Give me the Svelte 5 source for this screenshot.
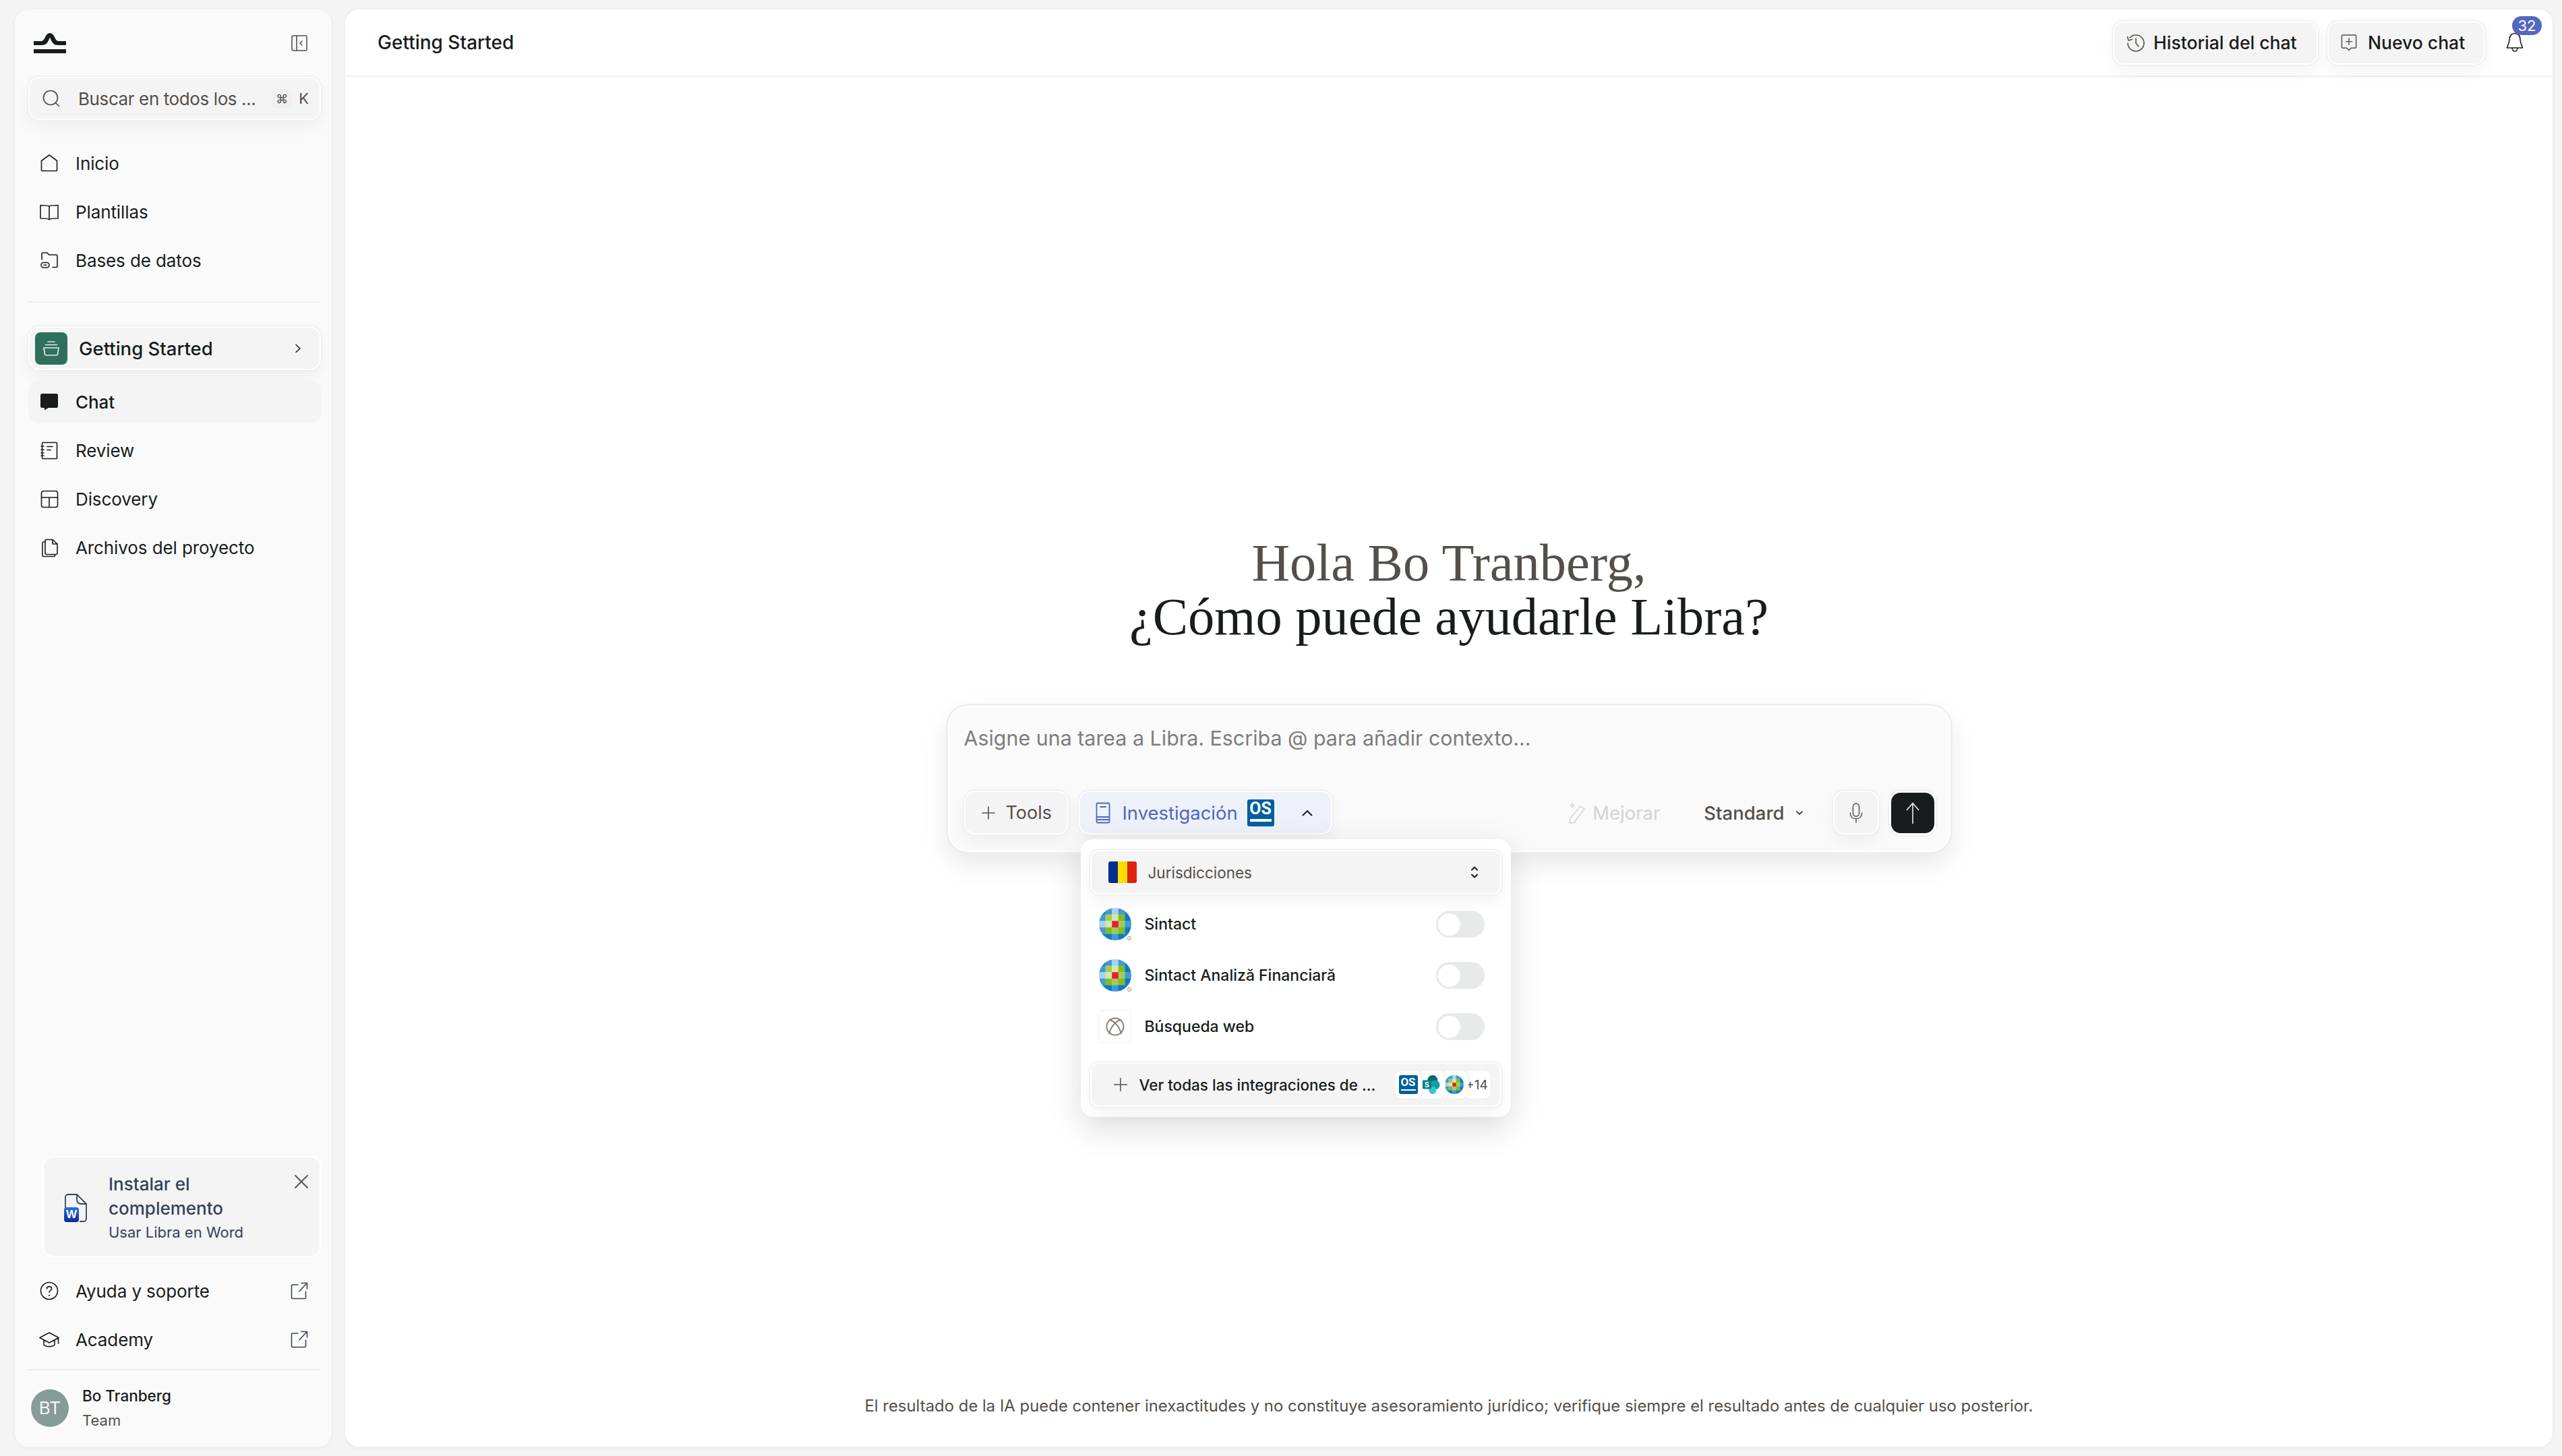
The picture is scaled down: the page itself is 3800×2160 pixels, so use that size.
<script>
  const topNav = [
    { label: 'Inicio', icon: 'home' },
    { label: 'Plantillas', icon: 'book' },
    { label: 'Bases de datos', icon: 'folder' }
  ];
  const projectNav = [
    { label: 'Chat', icon: 'chat', active: true },
    { label: 'Review', icon: 'notebook' },
    { label: 'Discovery', icon: 'table' },
    { label: 'Archivos del proyecto', icon: 'files' }
  ];
  const sources = [
    { label: 'Sintact', logo: 'wk' },
    { label: 'Sintact Analiză Financiară', logo: 'wk' },
    { label: 'Búsqueda web', logo: 'web' }
  ];
  const wkGrid = [
    ['#0a7cc1', '#3f9ad6', '#a6d3ee', '#3f9ad6', '#0a7cc1'],
    ['#3f9ad6', '#a2cc5a', '#d4e8a8', '#85bc20', '#0a7cc1'],
    ['#a6d3ee', '#d4e8a8', '#e5202e', '#a2cc5a', '#3f9ad6'],
    ['#3f9ad6', '#85bc20', '#a2cc5a', '#85bc20', '#0a7cc1'],
    ['#0a7cc1', '#0a7cc1', '#3f9ad6', '#0a7cc1', '#0a7cc1']
  ];
</script>

{#snippet navIcon(name)}
  <svg class="nav-icon" viewBox="0 0 30 30" fill="none" stroke="currentColor" stroke-width="1.6" stroke-linejoin="round" stroke-linecap="round">
    {#if name === 'home'}
      <path d="M15 3 26.500 11.500V25a1.500 1.500 0 0 1-1.500 1.500H5A1.500 1.500 0 0 1 3.500 25V11.500z" />
    {:else if name === 'book'}
      <path d="M15 7c-2-1.500-9-1.500-13-1.500v19.500c4 0 11 0 13 1.500 2-1.500 9-1.500 13-1.500V5.500C24 5.500 17 5.500 15 7zM15 7v20" />
    {:else if name === 'folder'}
      <path d="M4 14V5.500C4 4.500 4.500 4 5.500 4h6.500l2.500 3h11c1 0 1.500.5 1.500 1.500V24c0 1-.5 1.500-1.500 1.500H20" />
      <rect x="3" y="18.500" width="12" height="7.500" rx="3.700" />
      <path d="M7 22.200h4" />
    {:else if name === 'chat'}
      <path fill="currentColor" stroke="none" d="M4.500 3h21A2.500 2.500 0 0 1 28 5.500v16a2.500 2.500 0 0 1-2.500 2.500H14l-6 3.500V24H4.500A2.500 2.500 0 0 1 2 21.500v-16A2.500 2.500 0 0 1 4.500 3z" />
    {:else if name === 'notebook'}
      <path d="M6 3.500h19a1.500 1.500 0 0 1 1.500 1.500v21a1.500 1.500 0 0 1-1.500 1.500H6a1.500 1.500 0 0 1-1.500-1.500V5A1.500 1.500 0 0 1 6 3.500z" />
      <path d="M3 9h4M3 14h4M3 19h4M3 23h4M12 9.500h8M12 14.500h5" />
    {:else if name === 'table'}
      <rect x="3.500" y="3.500" width="24" height="24" rx="3" />
      <path d="M3.500 13h24M15 13v14.500" />
    {:else if name === 'files'}
      <path d="M9 24V5a1.500 1.500 0 0 1 1.500-1.500H20L27 10v14a1.500 1.500 0 0 1-1.500 1.500h-15A1.500 1.500 0 0 1 9 24zM20 3.500V10h7" />
      <path d="M9 7H6.500A1.500 1.500 0 0 0 5 8.500V27a1.500 1.500 0 0 0 1.500 1.500H22a1.500 1.500 0 0 0 1.500-1.500v-1.500" />
    {:else if name === 'help'}
      <circle cx="15" cy="15" r="12.500" />
      <path d="M11.500 12c0-2 1.600-3.400 3.600-3.400s3.500 1.300 3.500 3.100c0 2.700-3.600 2.800-3.600 5.500" />
      <path d="M15 21.500v.3" stroke-width="2" />
    {:else if name === 'academy'}
      <path d="M15 5 1 12.500 15 20l14-7.500zM7 16v7c3 3.500 13 3.500 16 0v-7M28.500 13v8" />
    {/if}
  </svg>
{/snippet}

{#snippet external()}
  <svg class="ext" viewBox="0 0 26 26" fill="none" stroke="#3c4654" stroke-width="1.600" stroke-linecap="round" stroke-linejoin="round">
    <path d="M11 4H3a1.500 1.500 0 0 0-1.500 1.500V23A1.500 1.500 0 0 0 3 24.500h18a1.500 1.500 0 0 0 1.500-1.500v-9M13 13.500 24.500 1.500M16 1.500h8.500V10" />
  </svg>
{/snippet}

{#snippet wkLogo(size, mark)}
  <svg width={size} height={size} viewBox="0 0 48 48" class="wk">
    <defs>
      <clipPath id="wk-clip"><circle cx="24" cy="24" r="24" /></clipPath>
    </defs>
    <g clip-path="url(#wk-clip)">
      {#each wkGrid as row, r}
        {#each row as color, c}
          <rect x={c * 9.600} y={r * 9.600} width="9.900" height="9.900" fill={color} />
        {/each}
      {/each}
    </g>
    {#if mark}
      <circle cx="45" cy="45" r="2.500" fill="#fff" stroke="#8a8a8a" stroke-width="1" />
    {/if}
  </svg>
{/snippet}

{#snippet osBadge()}
  <span class="os"><span class="os-text">OS</span><span class="os-bar"></span></span>
{/snippet}

<div class="page">
  <aside class="sidebar">
    <div class="brand">
      <svg class="logo" viewBox="0 0 48 30" fill="#181c1c">
        <path d="M0 12h10c4 0 5-2 7-6 2-4 4-6 7-6s5 2 7 6c2 4 3 6 7 6h10v6H36c-6 0-8-3-10-7-1-2-1.500-4-2-4s-1 2-2 4c-2 4-4 7-10 7H0zM0 24h48v6H0z" />
      </svg>
      <svg class="collapse" viewBox="0 0 24 24" fill="none" stroke="#544f4a" stroke-width="1.600" stroke-linejoin="round" stroke-linecap="round">
        <rect x="1" y="1" width="22" height="22" rx="1.500" />
        <path d="M8 1v22M16 9l-3 3 3 3" />
      </svg>
    </div>

    <div class="search chip">
      <svg class="search-icon" viewBox="0 0 26 26" fill="none" stroke="#544f4a" stroke-width="1.700" stroke-linecap="round">
        <circle cx="12" cy="12" r="10.500" />
        <path d="M20 20l4.500 4.500" />
      </svg>
      <span class="search-text">Buscar en todos los ...</span>
      <span class="kbd">⌘</span>
      <span class="kbd-k">K</span>
    </div>

    <nav class="nav top-nav">
      {#each topNav as item}
        <div class="nav-item">
          {@render navIcon(item.icon)}
          <span>{item.label}</span>
        </div>
      {/each}
    </nav>

    <div class="divider"></div>

    <div class="project chip">
      <span class="project-icon">
        <svg viewBox="0 0 26 24" fill="none" stroke="#dfeee8" stroke-width="1.700" stroke-linejoin="round" stroke-linecap="round">
          <path d="M8 2h10M4.500 6.500h17M2 11h22l-1.500 9.500a2 2 0 0 1-2 1.500h-15a2 2 0 0 1-2-1.500z" />
        </svg>
      </span>
      <span class="project-name">Getting Started</span>
      <svg class="project-chevron" viewBox="0 0 10 14" fill="none" stroke="#181c1c" stroke-width="1.600" stroke-linecap="round" stroke-linejoin="round"><path d="M2 1.500 8 7l-6 5.500" /></svg>
    </div>

    <nav class="nav project-nav">
      {#each projectNav as item}
        <div class="nav-item" class:active={item.active}>
          {@render navIcon(item.icon)}
          <span>{item.label}</span>
        </div>
      {/each}
    </nav>

    <div class="addin">
      <svg class="word" viewBox="0 0 34 42">
        <path d="M2 20V5a4 4 0 0 1 4-4h13l14 14v22a4 4 0 0 1-4 4h-5M19 1v8a6 6 0 0 0 6 6h8" fill="none" stroke="#35425a" stroke-width="1.800" stroke-linecap="round" stroke-linejoin="round" />
        <defs><linearGradient id="word-grad" x1="0" y1="0" x2="0" y2="1"><stop offset="0" stop-color="#2a72e0" /><stop offset="1" stop-color="#0a2a9e" /></linearGradient></defs>
        <rect x="0" y="20" width="22" height="22" rx="4" fill="url(#word-grad)" />
        <text x="11" y="36" text-anchor="middle" class="word-w">W</text>
      </svg>
      <div class="addin-text">
        <div class="addin-title">Instalar el complemento</div>
        <div class="addin-sub">Usar Libra en Word</div>
      </div>
      <svg class="addin-close" viewBox="0 0 20 20" fill="none" stroke="#544f4a" stroke-width="1.800" stroke-linecap="round"><path d="M1 1l18 18M19 1 1 19" /></svg>
    </div>

    <nav class="nav footer-nav">
      <div class="nav-item">
        {@render navIcon('help')}
        <span>Ayuda y soporte</span>
        {@render external()}
      </div>
      <div class="nav-item">
        {@render navIcon('academy')}
        <span>Academy</span>
        {@render external()}
      </div>
    </nav>

    <div class="divider user-divider"></div>

    <div class="user">
      <span class="avatar">BT</span>
      <div class="user-text">
        <div class="user-name">Bo Tranberg</div>
        <div class="user-plan">Team</div>
      </div>
    </div>
  </aside>

  <main class="main">
    <header class="header">
      <span class="header-title">Getting Started</span>
      <div class="header-actions">
        <button class="chip head-btn history">
          <svg viewBox="0 0 28 28" fill="none" stroke="#544f4a" stroke-width="1.600" stroke-linecap="round" stroke-linejoin="round">
            <path d="M5 7a12 12 0 1 1-3 8M1.500 5.500 3 11l5.500-1.500M14 8v7l4 5" />
          </svg>
          Historial del chat
        </button>
        <button class="chip head-btn new-chat">
          <svg viewBox="0 0 26 28" fill="none" stroke="#544f4a" stroke-width="1.600" stroke-linecap="round" stroke-linejoin="round">
            <path d="M3 2h20a1.500 1.500 0 0 1 1.500 1.500v18a1.500 1.500 0 0 1-1.500 1.500h-6.500L13 26.500 9.500 23H3a1.500 1.500 0 0 1-1.500-1.500v-18A1.500 1.500 0 0 1 3 2zM13 7.500v10M8 12.500h10" />
          </svg>
          Nuevo chat
        </button>
        <div class="bell-wrap">
          <svg class="bell" viewBox="0 0 26 30" fill="none" stroke="#181c1c" stroke-width="1.600" stroke-linecap="round" stroke-linejoin="round">
            <path d="M13 1.500c-5 0-8 4-8 9 0 7-3.500 10-3.500 12.500h23c0-2.500-3.500-5.500-3.500-12.500 0-5-3-9-8-9zM9 23c0 3 1.800 5 4 5s4-2 4-5" />
          </svg>
          <span class="badge">32</span>
        </div>
      </div>
    </header>

    <section class="center">
      <h1 class="greeting">
        <span class="hello">Hola Bo Tranberg,</span>
        <span class="ask">¿Cómo puede ayudarle Libra?</span>
      </h1>

      <div class="composer">
        <div class="placeholder">Asigne una tarea a Libra. Escriba @ para añadir contexto...</div>
        <div class="composer-bar">
          <button class="chip tools">
            <svg viewBox="0 0 20 20" fill="none" stroke="#544f4a" stroke-width="1.600" stroke-linecap="round"><path d="M10 1v18M1 10h18" /></svg>
            Tools
          </button>
          <button class="chip research">
            <svg class="research-book" viewBox="0 0 22 32" fill="none" stroke="#4f66bf" stroke-width="1.800" stroke-linejoin="round" stroke-linecap="round">
              <path d="M3 1.500h16a1.500 1.500 0 0 1 1.500 1.500v26a1.500 1.500 0 0 1-1.500 1.500H3A1.500 1.500 0 0 1 1.500 29V3A1.500 1.500 0 0 1 3 1.500zM1.500 22h19M1.500 26h19M7 7h8" />
            </svg>
            <span class="research-label">Investigación</span>
            {@render osBadge()}
            <svg class="research-chevron" viewBox="0 0 16 10" fill="none" stroke="#181c1c" stroke-width="2" stroke-linecap="round" stroke-linejoin="round"><path d="M1.500 8.500 8 2l6.500 6.500" /></svg>
          </button>

          <div class="improve">
            <svg viewBox="0 0 26 32" fill="none" stroke="#d3d3d3" stroke-width="1.500" stroke-linejoin="round" stroke-linecap="round">
              <path d="M18 6l6 4L9 30l-7 1 1-7zM6 2l2.500 3L6 8 3.500 5z" />
            </svg>
            Mejorar
          </div>
          <div class="standard">
            Standard
            <svg viewBox="0 0 12 8" fill="none" stroke="#544f4a" stroke-width="2" stroke-linecap="round" stroke-linejoin="round"><path d="M2 2l4 4 4-4" /></svg>
          </div>
          <button class="chip mic">
            <svg viewBox="0 0 22 34" fill="none" stroke="#544f4a" stroke-width="1.600" stroke-linecap="round">
              <rect x="6" y="1.500" width="10" height="21" rx="5" />
              <path d="M1.500 17c0 6 4 9.500 9.500 9.500s9.500-3.500 9.500-9.500M11 26.500v6" />
            </svg>
          </button>
          <button class="send">
            <svg viewBox="0 0 22 36" fill="none" stroke="#e8e8e8" stroke-width="1.800" stroke-linecap="round" stroke-linejoin="round"><path d="M11 35V2M1.500 13 11 2l9.500 11" /></svg>
          </button>
        </div>

        <div class="popup">
          <div class="chip jurisdiction">
            <span class="flag"><i class="blue"></i><i class="yellow"></i><i class="red"></i></span>
            <span class="jurisdiction-label">Jurisdicciones</span>
            <svg viewBox="0 0 12 20" fill="none" stroke="#181c1c" stroke-width="2" stroke-linecap="round" stroke-linejoin="round"><path d="M2 6.500l4-4 4 4M2 13.500l4 4 4-4" /></svg>
          </div>

          {#each sources as source}
            <div class="source">
              {#if source.logo === 'wk'}
                {@render wkLogo(48, true)}
              {:else}
                <span class="web-logo">
                  <svg viewBox="0 0 28 28" fill="none" stroke="#857b75" stroke-width="1.800">
                    <circle cx="14" cy="14" r="12.500" />
                    <path d="M5 4c8 1 16 11 18 21M23 4C15 5 7 15 5 25" />
                  </svg>
                </span>
              {/if}
              <span class="source-label">{source.label}</span>
              <span class="toggle"><span class="knob"></span></span>
            </div>
          {/each}

          <div class="chip all">
            <svg class="all-plus" viewBox="0 0 20 20" fill="none" stroke="#544f4a" stroke-width="1.500" stroke-linecap="round"><path d="M10 0v20M0 10h20" /></svg>
            <span class="all-label">Ver todas las integraciones de ...</span>
            <div class="stack">
              <span class="stack-item first">{@render osBadge()}</span>
              <span class="stack-item second">
                <svg viewBox="0 0 28 30" width="26" height="28">
                  <circle cx="16" cy="8" r="8" fill="#036c70" />
                  <circle cx="20" cy="15.500" r="7.500" fill="#1a9ba1" />
                  <circle cx="16" cy="24" r="6" fill="#37c6d0" />
                  <rect x="0" y="8" width="14" height="14" rx="1.500" fill="#038387" />
                  <text x="7" y="19" text-anchor="middle" class="sp-s">S</text>
                </svg>
              </span>
              <span class="stack-item third">{@render wkLogo(28, false)}</span>
              <span class="stack-item more">+14</span>
            </div>
          </div>
        </div>
      </div>

      <p class="disclaimer">El resultado de la IA puede contener inexactitudes y no constituye asesoramiento jurídico; verifique siempre el resultado antes de cualquier uso posterior.</p>
    </section>
  </main>
</div>

<style>
  :global(body) {
    margin: 0;
    background: #f4f4f4;
  }

  .page {
    display: flex;
    gap: 20px;
    box-sizing: border-box;
    height: 2160px;
    padding: 14px 14px 14px 22px;
    font-family: Inter, "Noto Sans", sans-serif;
    font-size: 26px;
    color: #181c1c;
  }

  button {
    font: inherit;
    color: inherit;
    cursor: pointer;
  }

  .chip {
    box-sizing: border-box;
    background: #f4f4f4;
    border: 2px solid #fff;
    box-shadow: 0 0 0 1.500px #eeeeee, 0 10px 24px rgba(0, 0, 0, 0.05);
    border-radius: 16px;
  }

  /* sidebar */
  .sidebar {
    display: flex;
    flex-direction: column;
    box-sizing: border-box;
    width: 470px;
    padding: 0 16px 0 20px;
    background: #fafafa;
    border-radius: 20px;
    box-shadow: 0 0 0 1.500px #eeeeee, 0 2px 6px rgba(0, 0, 0, 0.04);
    flex-shrink: 0;
  }

  .brand {
    display: flex;
    align-items: center;
    justify-content: space-between;
    height: 100px;
    padding: 0 20px 0 8px;
  }

  .logo {
    width: 48px;
    height: 30px;
  }

  .collapse {
    width: 24px;
    height: 24px;
  }

  .search {
    display: flex;
    align-items: center;
    height: 64px;
    padding: 0 16px 0 19px;
    color: #544f4a;
  }

  .search-icon {
    width: 26px;
    height: 26px;
    margin-right: 27px;
  }

  .search-text {
    flex: 1;
    letter-spacing: -0.400px;
    white-space: nowrap;
  }

  .kbd {
    display: flex;
    align-items: center;
    justify-content: center;
    width: 28px;
    height: 26px;
    border-radius: 6px;
    background: #f0f0f0;
    border: 1px solid #eee;
    font-size: 18px;
    margin-right: 10px;
  }

  .kbd-k {
    font-size: 22px;
  }

  .nav {
    display: flex;
    flex-direction: column;
    gap: 8px;
    margin-top: 28px;
  }

  .top-nav {
    margin-top: 32px;
  }

  .nav-item {
    display: flex;
    align-items: center;
    gap: 24px;
    height: 64px;
    padding-left: 16px;
    border-radius: 16px;
    letter-spacing: -0.100px;
    white-space: nowrap;
  }

  .nav-item span {
    flex: 1;
  }

  .nav-item.active {
    background: #f4f4f4;
    font-weight: 500;
  }

  .nav-icon {
    width: 30px;
    height: 30px;
    flex-shrink: 0;
  }

  .divider {
    height: 2px;
    background: #eeeeee;
    margin-top: 29px;
  }

  .project {
    display: flex;
    align-items: center;
    height: 65px;
    margin-top: 35px;
    padding: 0 27px 0 8px;
  }

  .project-icon {
    display: flex;
    align-items: center;
    justify-content: center;
    width: 48px;
    height: 48px;
    border-radius: 8px;
    background: #2f6f5b;
    margin-right: 17px;
  }

  .project-icon svg {
    width: 26px;
    height: 24px;
  }

  .project-name {
    flex: 1;
    font-size: 27.500px;
    font-weight: 500;
  }

  .project-chevron {
    width: 10px;
    height: 14px;
  }

  .project-nav {
    margin-top: 15px;
  }

  .addin {
    display: flex;
    position: relative;
    box-sizing: border-box;
    margin: auto 0 0 21px;
    height: 150px;
    padding: 22px 16px 0 30px;
    background: #f4f4f4;
    border: 2px solid #fff;
    border-radius: 16px;
    color: #35425a;
  }

  .word {
    width: 34px;
    height: 42px;
    margin-top: 32px;
    margin-right: 32px;
    flex-shrink: 0;
  }

  .word-w {
    font: 700 17px "Liberation Sans", sans-serif;
    fill: #fff;
  }

  .addin-title {
    width: 230px;
    font-weight: 500;
    line-height: 36px;
  }

  .addin-sub {
    font-size: 22px;
    line-height: 34px;
  }

  .addin-close {
    position: absolute;
    top: 26px;
    right: 17px;
    width: 20px;
    height: 20px;
  }

  .footer-nav {
    margin-top: 18px;
  }

  .ext {
    width: 26px;
    height: 26px;
    margin-right: 19px;
  }

  .user-divider {
    margin-top: 12px;
  }

  .user {
    display: flex;
    align-items: center;
    height: 111px;
    padding-left: 4px;
    margin-bottom: 2px;
  }

  .avatar {
    display: flex;
    align-items: center;
    justify-content: center;
    width: 56px;
    height: 56px;
    border-radius: 50%;
    background: #879b98;
    box-shadow: 0 0 0 3px #fff;
    color: #f4f6f6;
    font-size: 26px;
    margin-right: 20px;
  }

  .user-name {
    font-size: 22.500px;
    font-weight: 500;
    line-height: 36px;
  }

  .user-plan {
    font-size: 22px;
    line-height: 36px;
    color: #544f4a;
  }

  /* main */
  .main {
    display: flex;
    flex-direction: column;
    flex: 1;
    background: #fff;
    border-radius: 20px;
    box-shadow: 0 0 0 1.500px #eeeeee, 0 2px 6px rgba(0, 0, 0, 0.04);
  }

  .header {
    display: flex;
    align-items: center;
    justify-content: space-between;
    box-sizing: border-box;
    height: 100px;
    padding: 0 16px 0 48px;
    border-bottom: 2px solid #eeeeee;
  }

  .header-title {
    font-size: 28px;
    font-weight: 500;
  }

  .header-actions {
    display: flex;
    align-items: center;
    gap: 14px;
  }

  .head-btn {
    display: flex;
    align-items: center;
    height: 65px;
    white-space: nowrap;
    font-size: 26.500px;
    font-weight: 500;
  }

  .history {
    width: 304px;
    gap: 12px;
    padding-left: 18px;
  }

  .history svg {
    width: 28px;
    height: 28px;
  }

  .new-chat {
    width: 234px;
    gap: 16px;
    padding-left: 18px;
  }

  .new-chat svg {
    width: 24px;
    height: 28px;
  }

  .bell-wrap {
    position: relative;
    width: 70px;
    height: 65px;
    display: flex;
    align-items: center;
    padding-left: 17px;
    box-sizing: border-box;
  }

  .bell {
    width: 26px;
    height: 30px;
  }

  .badge {
    position: absolute;
    left: 26px;
    top: -7px;
    display: flex;
    align-items: center;
    justify-content: center;
    width: 44px;
    height: 28px;
    border-radius: 14px;
    background: #5468c0;
    color: #fff;
    font-size: 22px;
  }

  .center {
    display: flex;
    flex-direction: column;
    align-items: center;
    flex: 1;
    padding-top: 681px;
  }

  .greeting {
    display: flex;
    flex-direction: column;
    align-items: center;
    margin: 0;
    font: 400 78.500px/80px "Liberation Serif", serif;
  }

  .hello {
    color: #544f4a;
  }

  /* composer */
  .composer {
    position: relative;
    box-sizing: border-box;
    width: 1487px;
    height: 217px;
    margin-top: 92px;
    padding: 0 22px;
    background: #fafafa;
    border: 2px solid #fff;
    border-radius: 30px;
    box-shadow: 0 0 0 3px #eeeeee, 0 16px 40px rgba(0, 0, 0, 0.1);
  }

  .placeholder {
    margin-top: 28px;
    height: 36px;
    line-height: 36px;
    font-size: 30.400px;
    color: #7d7d7d;
    white-space: nowrap;
  }

  .composer-bar {
    display: flex;
    align-items: center;
    gap: 15px;
    margin-top: 60px;
  }

  .tools {
    display: flex;
    align-items: center;
    gap: 16px;
    width: 155px;
    height: 65px;
    padding-left: 24px;
    color: #544f4a;
    font-size: 27px;
  }

  .tools svg {
    width: 20px;
    height: 20px;
  }

  .research {
    display: flex;
    align-items: center;
    width: 376px;
    height: 65px;
    padding-left: 23px;
    background: #edf1fa;
  }

  .research-book {
    width: 22px;
    height: 32px;
    margin-right: 18px;
  }

  .research-label {
    font-size: 27.400px;
    color: #4f66bf;
    margin-right: 14px;
  }

  .research-chevron {
    width: 16px;
    height: 10px;
    margin-left: 41px;
  }

  .os {
    display: inline-flex;
    flex-direction: column;
    align-items: center;
    box-sizing: border-box;
    width: 40px;
    height: 40px;
    padding-top: 1px;
    background: #005f9e;
    border-radius: 3px;
  }

  .os-text {
    font: 700 25px/26px Roboto, sans-serif;
    color: #fff;
  }

  .os-bar {
    width: 32px;
    height: 4px;
    margin-top: 2px;
    background: #fff;
  }

  .improve {
    display: flex;
    align-items: center;
    gap: 10px;
    margin-left: auto;
    color: #d3d3d3;
    font-size: 27.500px;
  }

  .improve svg {
    width: 26px;
    height: 32px;
  }

  .standard {
    display: flex;
    align-items: center;
    gap: 16px;
    margin-left: 50px;
    font-size: 27.500px;
    font-weight: 500;
    color: #544f4a;
  }

  .standard svg {
    width: 12px;
    height: 8px;
  }

  .mic {
    display: flex;
    align-items: center;
    justify-content: center;
    width: 68px;
    height: 65px;
    margin: 0 3px 0 29px;
  }

  .mic svg {
    width: 20px;
    height: 32px;
  }

  .send {
    display: flex;
    align-items: center;
    justify-content: center;
    width: 64px;
    height: 60px;
    padding: 0;
    border: none;
    border-radius: 14px;
    background: #181c1c;
    box-shadow: 0 0 0 3px #fff, 0 0 0 4.500px #eeeeee;
  }

  .send svg {
    width: 20px;
    height: 34px;
  }

  /* integrations popup */
  .popup {
    position: absolute;
    left: 195px;
    top: 196px;
    box-sizing: border-box;
    width: 638px;
    height: 412px;
    padding: 16px 14px 0;
    background: #fff;
    border-radius: 18px;
    box-shadow: 0 16px 50px rgba(0, 0, 0, 0.14);
    z-index: 2;
  }

  .jurisdiction {
    display: flex;
    align-items: center;
    height: 66px;
    padding: 0 32px 0 25px;
    border-radius: 12px;
    margin-bottom: 6px;
  }

  .jurisdiction svg {
    width: 12px;
    height: 20px;
  }

  .flag {
    display: flex;
    width: 42px;
    height: 32px;
    border-radius: 3px;
    overflow: hidden;
    margin-right: 17px;
  }

  .flag i {
    flex: 1;
  }

  .blue {
    background: #00308f;
  }

  .yellow {
    background: #ffdd00;
  }

  .red {
    background: #e02210;
  }

  .jurisdiction-label {
    flex: 1;
    font-size: 22.500px;
    color: #544f4a;
  }

  .source {
    display: flex;
    align-items: center;
    height: 76px;
    padding: 0 25px 0 13px;
  }

  .wk {
    flex-shrink: 0;
  }

  .web-logo {
    display: flex;
    align-items: center;
    justify-content: center;
    box-sizing: border-box;
    width: 48px;
    height: 48px;
    border: 1px solid #eeeeee;
    border-radius: 4px;
  }

  .web-logo svg {
    width: 28px;
    height: 28px;
  }

  .source-label {
    flex: 1;
    margin-left: 20px;
    font-size: 23px;
    font-weight: 500;
  }

  .toggle {
    display: flex;
    align-items: center;
    box-sizing: border-box;
    width: 72px;
    height: 40px;
    padding-left: 3px;
    background: #e8e9e9;
    border-radius: 20px;
  }

  .knob {
    width: 33px;
    height: 33px;
    border-radius: 50%;
    background: #fff;
  }

  .all {
    display: flex;
    align-items: center;
    height: 66px;
    margin-top: 15px;
    padding: 0 14px 0 33px;
    border-radius: 12px;
  }

  .all-plus {
    width: 20px;
    height: 20px;
    margin-right: 18px;
  }

  .all-label {
    flex: 1;
    font-size: 22.500px;
    font-weight: 500;
    white-space: nowrap;
  }

  .stack {
    display: flex;
  }

  .stack-item {
    display: flex;
    align-items: center;
    justify-content: center;
    box-sizing: border-box;
    position: relative;
    width: 40px;
    height: 42px;
    margin-left: -6px;
    background: #fff;
    border-radius: 10px;
    box-shadow: 0 0 0 1px #eeeeee;
  }

  .stack-item.first {
    margin-left: 0;
    z-index: 3;
  }

  .stack-item.second {
    z-index: 2;
  }

  .stack-item.third {
    z-index: 1;
  }

  .stack-item .os {
    width: 28px;
    height: 28px;
    padding-top: 0;
  }

  .stack-item .os-text {
    font-size: 17px;
    line-height: 20px;
  }

  .stack-item .os-bar {
    width: 22px;
    height: 2px;
    margin-top: 1px;
  }

  .sp-s {
    font: 700 11px "Liberation Sans", sans-serif;
    fill: #fff;
  }

  .more {
    font-size: 19px;
    color: #544f4a;
  }

  .disclaimer {
    margin: auto 0 46px;
    font-size: 23.900px;
    color: #544f4a;
    white-space: nowrap;
  }
</style>
